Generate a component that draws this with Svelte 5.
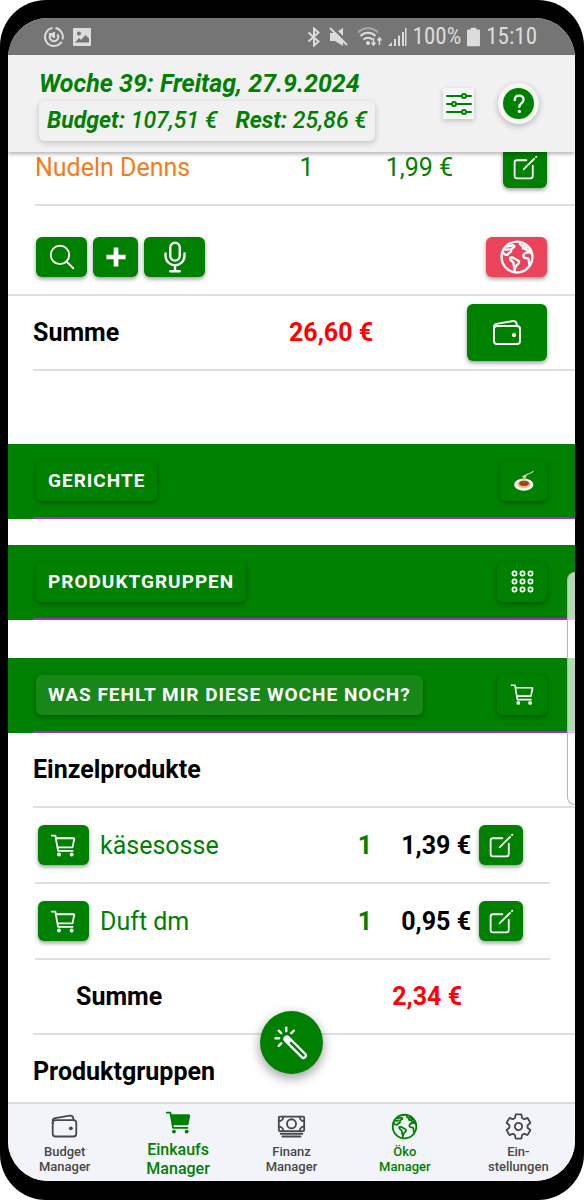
<script>
  const tabs = [
    { icon: 'wallet', lines: ['Budget', 'Manager'], state: '' },
    { icon: 'cartFilled', lines: ['Einkaufs', 'Manager'], state: 'active' },
    { icon: 'cash', lines: ['Finanz', 'Manager'], state: '' },
    { icon: 'earth', lines: ['Öko', 'Manager'], state: 'eco' },
    { icon: 'settings', lines: ['Ein-', 'stellungen'], state: '' }
  ];
  const products = [
    { name: 'käsesosse', count: 1, price: '1,39 €' },
    { name: 'Duft dm', count: 1, price: '0,95 €' }
  ];
  const sections = [
    { title: 'GERICHTE', icon: 'pasta', label: 'Gerichte öffnen' },
    { title: 'PRODUKTGRUPPEN', icon: 'keypad', label: 'Produktgruppen öffnen' },
    { title: 'WAS FEHLT MIR DIESE WOCHE NOCH?', icon: 'cart', label: 'Einkaufswagen öffnen', open: true }
  ];
</script>

{#snippet icon(name, size)}
  <svg class="icon" width={size} height={size} viewBox="0 0 512 512" aria-hidden="true">
    {#if name === 'wallet'}
      <rect x="48" y="144" width="416" height="288" rx="48" />
      <path d="M411.36 144v-30A50 50 0 00352 64.9L88.64 109.85A50 50 0 0048 159v49" />
      <circle class="solid" cx="368" cy="288" r="34" />
    {:else if name === 'cart'}
      <circle cx="176" cy="416" r="20" /><circle cx="400" cy="416" r="20" />
      <path d="M48 80h64l48 272h256M160 288h249.44a8 8 0 007.85-6.43l28.8-144a8 8 0 00-7.85-9.57H128" />
    {:else if name === 'cartFilled'}
      <circle class="solid" cx="176" cy="416" r="34" /><circle class="solid" cx="400" cy="416" r="34" />
      <path class="solid" d="M456.8 120.78a23.92 23.92 0 00-18.56-8.78H133.89l-6.13-34.78A16 16 0 00112 64H48a16 16 0 000 32h50.58l45.66 258.78A16 16 0 00160 368h256a16 16 0 000-32H173.42l-5.64-32h241.66A24.07 24.07 0 00433 284.71l28.8-144a24 24 0 00-5-19.93z" />
    {:else if name === 'edit'}
      <path d="M384 224v184a40 40 0 01-40 40H104a40 40 0 01-40-40V168a40 40 0 0140-40h167.48" />
      <path class="solid" d="M459.94 53.25a16.06 16.06 0 00-23.22-.56L424.35 65a8 8 0 000 11.31l11.34 11.32a8 8 0 0011.34 0l12.06-12c6.1-6.09 6.67-16.01.85-22.38zM399.34 90L218.82 270.2a9 9 0 00-2.31 3.93L208.16 299a3.91 3.91 0 004.86 4.86l24.85-8.35a9 9 0 003.93-2.31L422 112.66a9 9 0 000-12.66l-9.95-10a9 9 0 00-12.71 0z" />
    {:else if name === 'search'}
      <path d="M221.09 64a157.09 157.09 0 10157.09 157.09A157.1 157.1 0 00221.09 64zM338.29 338.29L448 448" />
    {:else if name === 'plus'}
      <path class="heavy" d="M256 92v328M92 256h328" />
    {:else if name === 'mic'}
      <path d="M192 448h128M384 208v32c0 70.4-57.6 128-128 128s-128-57.6-128-128v-32M256 368v80M256 64a63.68 63.68 0 00-64 64v111c0 35.2 29 65 64 65s64-29 64-65V128c0-36-28-64-64-64z" />
    {:else if name === 'options'}
      <path d="M368 128h80M64 128h240M368 384h80M64 384h240M208 256h240M64 256h80" />
      <circle cx="336" cy="128" r="32" /><circle cx="176" cy="256" r="32" /><circle cx="336" cy="384" r="32" />
    {:else if name === 'help'}
      <path d="M178 186c0-58 40-84 80-84 44 0 82 28 82 76 0 62-78 66-78 132" stroke-width="42" />
      <circle class="solid" cx="262" cy="392" r="30" />
    {:else if name === 'keypad'}
      {#each [104, 256, 408] as y}{#each [104, 256, 408] as x}<circle cx={x} cy={y} r="40" />{/each}{/each}
    {:else if name === 'cash'}
      <rect x="32" y="80" width="448" height="256" rx="16" />
      <circle cx="256" cy="208" r="80" />
      <path d="M64 384h384M96 432h320M480 160a80 80 0 01-80-80M32 160a80 80 0 0080-80M480 256a80 80 0 00-80 80M32 256a80 80 0 0180 80" />
    {:else if name === 'earth'}
      <circle cx="256" cy="256" r="208" />
      <path d="M162 268c20-10 46-2 62 10 20 14 52 18 60 38 4 20-14 36-30 50-16 12-20 30-26 46-8-14-18-30-16-50 2-22-2-36-20-48-22-12-34-28-30-46z" />
      <path d="M64 192c14 18 28 38 52 36 18-2 20-20 34-26 20-8 32-22 26-38-6-18 12-24 26-30 18-8 24-24 10-34-14-8-34 2-50 8-14 6-26 6-34 6M84 150c20 8 42 8 58 2M226 412v44" />
      <path d="M300 58c-8 20-2 34 16 40 20 6 26 14 20 26-6 14 10 26 26 18 14-8 24-18 42-18M458 214c-18-14-36-24-58-20-28 4-50 16-56 34-6 22 4 40 26 42 20 2 40-2 44 18 4 20 0 42 8 62M352 96l28 4M386 164c20 4 34 4 50-2" />
    {:else if name === 'settings'}
      <path d="M262.29 192.31a64 64 0 1057.4 57.4 64.13 64.13 0 00-57.4-57.4zM416.39 256a154.34 154.34 0 01-1.53 20.79l45.21 35.46a10.81 10.81 0 012.45 13.75l-42.77 74a10.81 10.81 0 01-13.14 4.59l-44.9-18.08a16.11 16.11 0 00-15.17 1.75A164.48 164.48 0 01325 400.8a15.94 15.94 0 00-8.82 12.14l-6.73 47.89a11.08 11.08 0 01-10.68 9.17h-85.54a11.11 11.11 0 01-10.69-8.87l-6.72-47.82a16.07 16.07 0 00-9-12.22 155.3 155.3 0 01-21.46-12.57 16 16 0 00-15.11-1.71l-44.89 18.07a10.81 10.81 0 01-13.14-4.58l-42.77-74a10.8 10.8 0 012.45-13.75l38.21-30a16.05 16.05 0 006-14.08c-.36-4.17-.58-8.33-.58-12.5s.21-8.27.58-12.35a16 16 0 00-6.07-13.94l-38.19-30A10.81 10.81 0 0149.48 186l42.77-74a10.81 10.81 0 0113.14-4.59l44.9 18.08a16.11 16.11 0 0015.17-1.75A164.48 164.48 0 01187 111.2a15.94 15.94 0 008.82-12.14l6.73-47.89A11.08 11.08 0 01213.23 42h85.54a11.11 11.11 0 0110.69 8.87l6.72 47.82a16.07 16.07 0 009 12.22 155.3 155.3 0 0121.46 12.57 16 16 0 0015.11 1.71l44.89-18.07a10.81 10.81 0 0113.14 4.58l42.77 74a10.8 10.8 0 01-2.45 13.75l-38.21 30a16.05 16.05 0 00-6.05 14.08c.33 4.14.55 8.3.55 12.47z" />
    {:else if name === 'wand'}
      <rect x="280.48" y="122.9" width="63.03" height="378.2" rx="31.52" transform="rotate(-45 312 312)" />
      <path class="solid" d="M178.38 178.38a31.64 31.64 0 000 44.75L223.25 268 268 223.25l-44.87-44.87a31.64 31.64 0 00-44.75 0z" />
      <path d="M48 192h48M90.18 90.18l33.94 33.94M192 48v48M293.82 90.18l-33.94 33.94M124.12 259.88l-33.94 33.94" />
    {:else if name === 'pasta'}
      <g stroke="none">
        <ellipse cx="250" cy="350" rx="246" ry="156" fill="#f8f8f4" />
        <ellipse cx="250" cy="338" rx="176" ry="108" fill="#e3dccd" />
        <ellipse cx="254" cy="336" rx="150" ry="92" fill="#eeb868" />
        <ellipse cx="258" cy="316" rx="124" ry="66" fill="#b3311d" />
        <path d="M206 288l46-34 56 30-32 34z" fill="#3c8a2e" />
        <path d="M226 244l10-130 92-14-22 80-30 64z" fill="#e9bd62" />
      </g>
      <path d="M226 148l120-64 70-30 72-42" stroke="#d5dcd8" stroke-width="26" />
    {/if}
  </svg>
{/snippet}

<div class="phone">
  <div class="screen">
    <div class="status">
      <svg width="20" height="20" viewBox="0 0 20 20" aria-hidden="true">
        <g fill="none" stroke="currentColor" stroke-width="2">
          <path d="M8.5 1.1A9 9 0 1 0 17.6 14.8M11.5 1.1a9 9 0 0 1 7 11.4" />
          <path d="M6.6 7.4a4.2 4.2 0 1 0 6.8 0M10 5v6" />
          <path d="M5 7h3.4v3" />
        </g>
      </svg>
      <svg width="20" height="20" viewBox="0 0 20 20" aria-hidden="true">
        <path fill="currentColor" fill-rule="evenodd" d="M2 1h16a1 1 0 0 1 1 1v16a1 1 0 0 1-1 1H2a1 1 0 0 1-1-1V2a1 1 0 0 1 1-1zm5 3.500a2 2 0 1 0 .01 0zM3 15.500h14v-4l-3.500-3.500-4.500 5-2-2z" />
      </svg>
      <span class="spacer"></span>
      <svg width="14" height="20" viewBox="0 0 14 20" aria-hidden="true">
        <path fill="none" stroke="currentColor" stroke-width="2" d="M1.500 5.500l10 9L7 18.500v-17l4.500 4-10 9" />
      </svg>
      <svg width="20" height="20" viewBox="0 0 20 20" aria-hidden="true">
        <path fill="currentColor" d="M1 6h5l8-5v18l-8-5H1z" />
        <path stroke="#757575" stroke-width="3" d="M3 0l16 16" />
        <path stroke="currentColor" stroke-width="2" d="M1 1l17 17" />
      </svg>
      <svg class="wifi" width="26" height="20" viewBox="0 0 26 20" aria-hidden="true">
        <g fill="none" stroke="currentColor" stroke-width="2">
          <path opacity=".5" d="M1 5.500a14 14 0 0 1 20 0" />
          <path d="M3.500 9a10.500 10.500 0 0 1 15 0M6.500 12.500a6.500 6.500 0 0 1 9 0" />
          <path stroke-width="1.500" d="M16.500 11v7m-2-2.500l2 2.500 2-2.500M22.500 18v-7m-2 2.500l2-2.500 2 2.500" />
        </g>
        <circle cx="11" cy="16" r="2" fill="currentColor" />
      </svg>
      <svg width="20" height="20" viewBox="0 0 20 20" aria-hidden="true">
        <path fill="currentColor" d="M1 19l4-4v4zM7 12h2v7H7zM11 8.500h2V19h-2zM15 5h2v14h-2zM18 1h1.500v18H18z" />
      </svg>
      <span>100%</span>
      <svg width="13" height="20" viewBox="0 0 14 20" aria-hidden="true">
        <path fill="currentColor" d="M4 0h6v2h3a1 1 0 0 1 1 1v16a1 1 0 0 1-1 1H1a1 1 0 0 1-1-1V3a1 1 0 0 1 1-1h3z" />
      </svg>
      <span>15:10</span>
    </div>

    <header>
      <div class="summary">
        <h1>Woche 39: Freitag, 27.9.2024</h1>
        <p class="budget">
          <span><b>Budget:</b> 107,51 €</span>
          <span><b>Rest:</b> 25,86 €</span>
        </p>
      </div>
      <button class="filter" aria-label="Filter">{@render icon('options', 32)}</button>
      <button class="help" aria-label="Hilfe"><span>{@render icon('help', 28)}</span></button>
    </header>

    <main>
      <div class="row first">
        <span class="grow orange">Nudeln Denns</span>
        <span class="amount">1</span>
        <span class="cost">1,99 €</span>
        <button class="btn w44" aria-label="Bearbeiten">{@render icon('edit', 29)}</button>
      </div>
      <div class="row tools">
        <button class="btn w51" aria-label="Suchen">{@render icon('search', 30)}</button>
        <button class="btn w45" aria-label="Hinzufügen">{@render icon('plus', 30)}</button>
        <button class="btn w61" aria-label="Spracheingabe">{@render icon('mic', 38)}</button>
        <span class="spacer"></span>
        <button class="btn w61 red" aria-label="Öko">{@render icon('earth', 38)}</button>
      </div>
      <div class="row total">
        <strong>Summe</strong>
        <strong class="sum">26,60 €</strong>
        <button class="btn pay" aria-label="Bezahlen">{@render icon('wallet', 32)}</button>
      </div>

      {#each sections as s}
        <section class="bar" class:open={s.open}>
          <div class="bar-inner">
            <button class="flat title">{s.title}</button>
            <button class="flat action" class:narrow={s.icon === 'pasta'} aria-label={s.label}>
              {@render icon(s.icon, s.icon === 'pasta' ? 20 : 27)}
            </button>
          </div>
        </section>
      {/each}

      <h2 class="row">Einzelprodukte</h2>
      <ul>
        {#each products as p}
          <li class="row item">
            <button class="btn w51" aria-label="In den Wagen">{@render icon('cart', 29)}</button>
            <span class="grow green">{p.name}</span>
            <strong class="green">{p.count}</strong>
            <strong class="price">{p.price}</strong>
            <button class="btn w44" aria-label="Bearbeiten">{@render icon('edit', 29)}</button>
          </li>
        {/each}
      </ul>
      <div class="row subtotal">
        <strong>Summe</strong>
        <strong class="sum">2,34 €</strong>
      </div>
      <h2 class="row">Produktgruppen</h2>
    </main>

    <nav>
      {#each tabs as t}
        <a href="#{t.icon}" class={t.state}>
          {@render icon(t.icon, 29)}
          <span>{t.lines[0]}<br />{t.lines[1]}</span>
        </a>
      {/each}
      <button class="fab" aria-label="Assistent">{@render icon('wand', 38)}</button>
    </nav>
    <div class="edge"></div>
  </div>
</div>

<style>
  :global(body) {
    margin: 0;
    background: #fff;
  }
  .phone {
    box-sizing: border-box;
    height: 100vh;
    padding: 18px 9px 19px 8px;
    background: #000;
    border-radius: 46px;
    font-family: Roboto, sans-serif;
    font-size: 25px;
    color: #000;
  }
  .screen {
    position: relative;
    display: flex;
    flex-direction: column;
    height: 100%;
    overflow: hidden;
    border-radius: 40px;
    background: #fff;
  }
  .icon {
    display: block;
    flex: none;
    fill: none;
    stroke: currentColor;
    stroke-width: 32;
    stroke-linecap: round;
    stroke-linejoin: round;
  }
  .icon .solid {
    fill: currentColor;
    stroke: none;
  }
  .icon .heavy {
    stroke-width: 80;
    stroke-linecap: butt;
  }
  .spacer {
    flex: 1;
  }
  .status {
    display: flex;
    align-items: center;
    flex: none;
    gap: 8px;
    height: 37px;
    padding: 0 38px 0 36px;
    background: #757575;
    color: #dcdcdc;
    font-family: 'Roboto Condensed', Roboto, sans-serif;
    font-size: 23px;
  }
  .status span + svg,
  .status svg + span {
    margin-left: -2px;
  }
  .status .spacer + svg {
    margin-left: 0;
  }
  .wifi {
    margin: 0 -4px 0 0;
  }
  header {
    position: relative;
    z-index: 1;
    display: flex;
    align-items: center;
    flex: none;
    box-sizing: border-box;
    height: 97px;
    padding: 0 36px 0 31px;
    background: #f1f1f1;
    box-shadow: 0 2px 4px rgba(0, 0, 0, 0.3);
    color: #008000;
  }
  .summary {
    flex: 1;
    padding-top: 2px;
  }
  h1 {
    margin: 0;
    font-size: 25px;
    line-height: 30px;
    font-weight: 700;
    font-style: italic;
  }
  .budget {
    display: inline-flex;
    gap: 18px;
    margin: 2px 0 0;
    padding: 0 8px;
    border-radius: 6px;
    box-shadow: 0 2px 6px rgba(0, 0, 0, 0.2);
    font-size: 23px;
    line-height: 40px;
    font-weight: 500;
    font-style: italic;
  }
  button {
    display: flex;
    align-items: center;
    justify-content: center;
    padding: 0;
    border: 0;
    font: inherit;
    color: #fff;
    cursor: pointer;
  }
  .filter {
    width: 31px;
    height: 31px;
    margin-right: 24px;
    background: #f5f5f5;
    box-shadow: 0 2px 5px rgba(0, 0, 0, 0.2);
    color: #008000;
  }
  .help {
    width: 41px;
    height: 41px;
    border-radius: 50%;
    background: #f6f6f6;
    box-shadow: 0 2px 6px rgba(0, 0, 0, 0.25);
  }
  .help span {
    display: grid;
    place-items: center;
    width: 31px;
    height: 31px;
    border-radius: 50%;
    background: #008000;
  }
  main {
    flex: 1;
    min-height: 0;
    overflow-y: auto;
    scrollbar-width: none;
  }
  .row {
    display: flex;
    align-items: center;
    box-sizing: border-box;
    height: 75px;
    margin: 0 0 0 25px;
    border-bottom: 2px solid #e0e0e0;
  }
  .row.first {
    margin: -21px 0 0 27px;
    padding-right: 28px;
  }
  .grow {
    flex: 1;
  }
  .orange {
    color: #f57c1a;
  }
  .green {
    color: #008000;
  }
  .amount {
    color: #008000;
    margin-right: 72px;
  }
  .cost {
    color: #008000;
    margin-right: 50px;
  }
  .btn {
    flex: none;
    height: 40px;
    border-radius: 6px;
    background: #008000;
    box-shadow: 0 2px 4px rgba(0, 0, 0, 0.4);
  }
  .w44 { width: 44px; }
  .w45 { width: 45px; }
  .w51 { width: 51px; }
  .w61 { width: 61px; }
  .btn.red {
    background: #eb445a;
  }
  .tools {
    gap: 6px;
    height: 90px;
    margin-left: 0;
    padding: 14px 28px 0 28px;
  }
  strong,
  h2 {
    font-size: 25px;
    font-weight: 700;
  }
  .total {
    display: grid;
    grid-template-columns: 1fr 88px 80px;
    column-gap: 90px;
    padding-right: 28px;
  }
  .sum {
    color: #f00;
    white-space: nowrap;
  }
  .pay {
    width: 80px;
    height: 57px;
  }
  .bar {
    margin-top: 26px;
    padding-left: 25px;
    background: #008000;
  }
  .total + .bar {
    margin-top: 73px;
  }
  .bar.open {
    margin-top: 38px;
  }
  .bar-inner {
    display: flex;
    align-items: center;
    justify-content: space-between;
    box-sizing: border-box;
    height: 75px;
    padding: 0 28px 0 3px;
    border-bottom: 2px solid #a32cc4;
  }
  .flat {
    height: 40px;
    border-radius: 6px;
    background: #008000;
    box-shadow: 0 2px 5px rgba(0, 0, 0, 0.35);
  }
  .title {
    padding: 0 12px;
    font-size: 19px;
    font-weight: 700;
    letter-spacing: 1px;
  }
  .open .title {
    background: #178717;
  }
  .action {
    width: 50px;
  }
  .narrow {
    width: 47px;
  }
  ul {
    margin: 0;
    padding: 0;
    list-style: none;
  }
  .row.item {
    height: 76px;
    margin: 0 25px 0 27px;
    padding: 0 27px 0 3px;
  }
  .item .grow {
    margin-left: 11px;
  }
  .price {
    width: 99px;
    margin-right: 8px;
    text-align: right;
  }
  .subtotal {
    justify-content: space-between;
    padding: 0 113px 0 43px;
  }
  nav {
    position: relative;
    display: grid;
    grid-template-columns: repeat(5, 1fr);
    flex: none;
    box-sizing: border-box;
    height: 79px;
    border-top: 2px solid #dcdcdc;
    background: #f3f4f9;
  }
  nav a {
    display: flex;
    flex-direction: column;
    align-items: center;
    padding-top: 8px;
    color: #484848;
    text-decoration: none;
    text-align: center;
    font-size: 13px;
    line-height: 15px;
    font-weight: 500;
  }
  nav a span {
    margin-top: 3px;
  }
  nav .eco {
    color: #008000;
  }
  nav .active {
    padding-top: 4px;
    color: #008000;
    font-size: 16px;
    line-height: 19px;
  }
  .fab {
    position: absolute;
    left: 50%;
    top: -93px;
    width: 63px;
    height: 63px;
    margin-left: -32px;
    border-radius: 50%;
    background: #008000;
    box-shadow: 0 4px 12px rgba(0, 0, 0, 0.4);
  }
  .edge {
    position: absolute;
    right: 0;
    top: 554px;
    z-index: 2;
    box-sizing: border-box;
    width: 8px;
    height: 233px;
    border: 1px solid #b5b5b5;
    border-right: 0;
    border-radius: 8px 0 0 8px;
    background: rgba(255, 255, 255, 0.7);
  }
</style>
